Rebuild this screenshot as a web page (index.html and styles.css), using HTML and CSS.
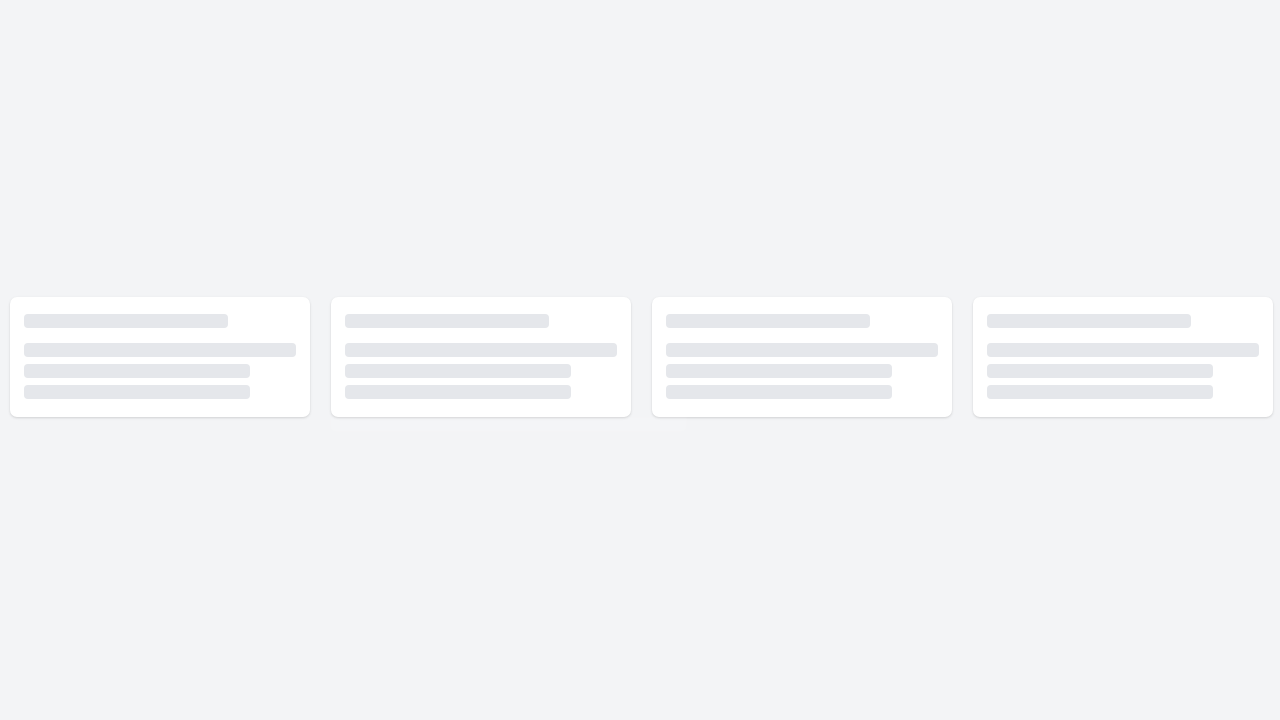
FILE: index.html
```html
<!DOCTYPE html>
<html lang="en">
<head>
<meta charset="utf-8">
<title>Loading</title>
<link rel="stylesheet" href="styles.css">
</head>
<body>
<main class="page">
  <div class="row">
    <div class="card">
      <div class="bar bar-title"></div>
      <div class="lines">
        <div class="bar bar-full"></div>
        <div class="bar bar-mid"></div>
        <div class="bar bar-mid"></div>
      </div>
    </div>
    <div class="card">
      <div class="bar bar-title"></div>
      <div class="lines">
        <div class="bar bar-full"></div>
        <div class="bar bar-mid"></div>
        <div class="bar bar-mid"></div>
      </div>
    </div>
    <div class="card">
      <div class="bar bar-title"></div>
      <div class="lines">
        <div class="bar bar-full"></div>
        <div class="bar bar-mid"></div>
        <div class="bar bar-mid"></div>
      </div>
    </div>
    <div class="card">
      <div class="bar bar-title"></div>
      <div class="lines">
        <div class="bar bar-full"></div>
        <div class="bar bar-mid"></div>
        <div class="bar bar-mid"></div>
      </div>
    </div>
  </div>
  <div class="ghost"></div>
</main>
</body>
</html>
```

FILE: styles.css
```css
html, body {
  margin: 0;
  padding: 0;
  background: #f3f4f6;
  font-family: "Inter", "Liberation Sans", sans-serif;
}

.page {
  box-sizing: border-box;
  width: 1280px;
  height: 720px;
  padding: 297px 0 0 10px;
  overflow: hidden;
}

.row {
  display: flex;
  gap: 21px;
}

.card {
  box-sizing: border-box;
  width: 300px;
  height: 120px;
  flex: 0 0 300px;
  background: #ffffff;
  border-radius: 7px;
  padding: 17px 14px 18px;
  box-shadow: 0 1px 3px rgba(0, 0, 0, 0.10), 0 1px 2px rgba(0, 0, 0, 0.05);
}

.bar {
  height: 14px;
  border-radius: 4px;
  background: #e5e7eb;
}

.bar-title {
  width: 204px;
}

.lines {
  margin-top: 15px;
  display: flex;
  flex-direction: column;
  gap: 7px;
}

.bar-full {
  width: 100%;
}

.bar-mid {
  width: 226px;
}

.ghost {
  margin-left: 320px;
  width: 357px;
  height: 15px;
  background: rgba(255, 255, 255, 0.12);
  border-radius: 0 0 6px 6px;
  filter: blur(1px);
}
```
